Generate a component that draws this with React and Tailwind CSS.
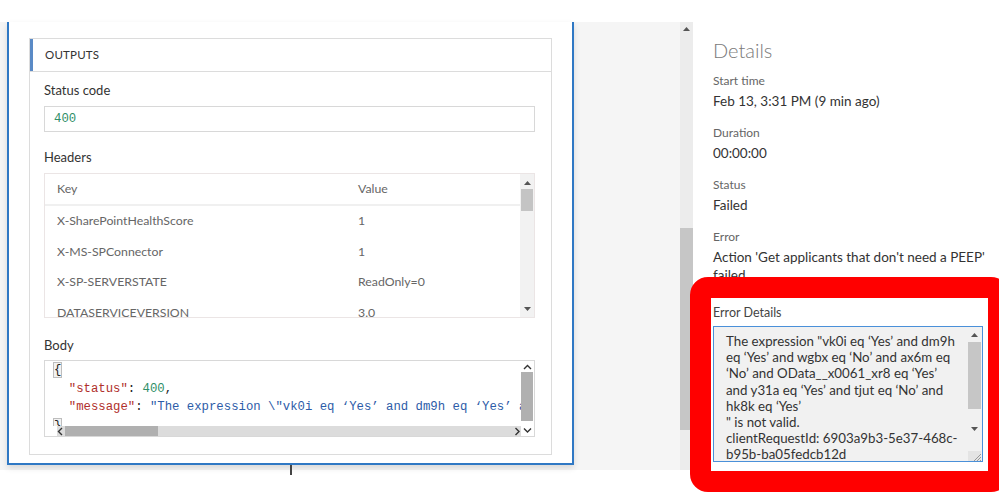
import React from "react";

const ui = "font-['Segoe_UI',Lato,'Noto_Sans',sans-serif]";
const mono = "font-['Consolas','Liberation_Mono',monospace]";

const headers = [
  ["X-SharePointHealthScore", "1"],
  ["X-MS-SPConnector", "1"],
  ["X-SP-SERVERSTATE", "ReadOnly=0"],
  ["DATASERVICEVERSION", "3.0"],
];

const details = [
  ["Start time", ["Feb 13, 3:31 PM (9 min ago)"]],
  ["Duration", ["00:00:00"]],
  ["Status", ["Failed"]],
  ["Error", ["Action 'Get applicants that don't need a PEEP'", "failed"]],
];

const errorLines = [
  "The expression \"vk0i eq \u2018Yes\u2019 and dm9h",
  "eq \u2018Yes\u2019 and wgbx eq \u2018No\u2019 and ax6m eq",
  "\u2018No\u2019 and OData__x0061_xr8 eq \u2018Yes\u2019",
  "and y31a eq \u2018Yes\u2019 and tjut eq \u2018No\u2019 and",
  "hk8k eq \u2018Yes\u2019",
  "\" is not valid.",
  "clientRequestId: 6903a9b3-5e37-468c-",
  "b95b-ba05fedcb12d",
];

const Tri = ({ down, className }) => (
  <svg width="7" height="4" viewBox="0 0 7 4" className={className}>
    <path d={down ? "M0 0h7L3.5 4z" : "M3.5 0L7 4H0z"} fill="#555" />
  </svg>
);

const Chev = ({ dir }) => {
  const d = {
    up: "M1 5l3.5-3.5L8 5",
    down: "M1 1.5L4.5 5 8 1.5",
    left: "M5 1L1.5 4.5 5 8",
    right: "M1.5 1L5 4.5 1.5 8",
  }[dir];
  const vert = dir === "up" || dir === "down";
  return (
    <svg width={vert ? 9 : 7} height={vert ? 7 : 9} viewBox={vert ? "0 0 9 7" : "0 0 7 9"}>
      <path d={d} fill="none" stroke="#333" strokeWidth="1.4" />
    </svg>
  );
};

const OutputsCard = () => (
  <div className="flex flex-col items-center">
    <div className="w-[567px] h-[443px] bg-white border-x-2 border-b-2 border-[#2f78c4] shadow-[0_3px_6px_rgba(0,0,0,0.12)] px-[20px] pt-[16px]">
      <div className="border border-[#dcdcdc] h-[417px]">
        <div className="flex items-center h-[33px] border-b border-[#dcdcdc]">
          <div className="w-[3px] h-full bg-[#5a8ac6]" />
          <div className="pl-[12px] text-[11.5px] text-[#333] tracking-[0.2px]">OUTPUTS</div>
        </div>
        <div className="pl-[14px] pr-[16px] pt-[10px]">
          <div className="text-[13px] leading-[16px] text-[#333]">Status code</div>
          <div className={`${mono} mt-[8px] h-[26px] border border-[#d8d8d8] pl-[9px] flex items-center text-[12.3px] text-[#2f8f68]`}>
            400
          </div>

          <div className="mt-[17px] text-[13px] leading-[16px] text-[#333]">Headers</div>
          <div className="mt-[8px] h-[145px] border border-[#ebe5e5] flex overflow-hidden">
            <div className="flex-1 overflow-hidden text-[12.3px] text-[#666]">
              <div className="flex items-center h-[32px] border-b-2 border-[#f0f0f0]">
                <div className="w-[313px] pl-[12px]">Key</div>
                <div>Value</div>
              </div>
              {headers.map(([k, v]) => (
                <div key={k} className="flex items-center h-[30.5px]">
                  <div className="w-[313px] pl-[12px]">{k}</div>
                  <div>{v}</div>
                </div>
              ))}
            </div>
            <div className="w-[14px] bg-[#f2f2f2] flex flex-col items-center">
              <Tri className="mt-[7px]" />
              <div className="mt-[4px] w-[12px] h-[22px] bg-[#c4c4c4]" />
              <div className="flex-1" />
              <Tri down className="mb-[6px]" />
            </div>
          </div>

          <div className="mt-[19px] text-[13px] leading-[16px] text-[#333]">Body</div>
          <div className="mt-[7px] h-[77px] border border-[#d8d8d8] flex">
            <div className="flex-1 flex flex-col overflow-hidden">
              <div className={`${mono} flex-1 overflow-hidden pl-[9px] text-[12.3px] leading-[18.5px] whitespace-pre text-[#222]`}>
                <div><span className="outline outline-1 outline-[#bdbdbd] bg-[#f2f2f2]">{"{"}</span></div>
                <div>
                  {"  "}<span className="text-[#b0302b]">"status"</span>: <span className="text-[#2f8f68]">400</span>,
                </div>
                <div>
                  {"  "}<span className="text-[#b0302b]">"message"</span>: <span className="text-[#2d5ca8]">"The expression \"vk0i eq ‘Yes’ and dm9h eq ‘Yes’ and wgbx eq ‘No’</span>
                </div>
                <div><span className="outline outline-1 outline-[#bdbdbd] bg-[#f2f2f2]">{"}"}</span></div>
              </div>
              <div className="h-[10px] flex items-center bg-[#dcdcdc] ml-[12px]">
                <Chev dir="left" />
                <div className="ml-[1px] w-[93px] h-full bg-[#b0b0b0]" />
                <div className="flex-1" />
                <Chev dir="right" />
              </div>
            </div>
            <div className="w-[12px] mr-[1px] flex flex-col items-center bg-white">
              <div className="mt-[3px]"><Chev dir="up" /></div>
              <div className="mt-[1px] w-[12px] h-[49px] bg-[#b0b0b0]" />
              <div className="flex-1" />
              <div className="mb-[2px]"><Chev dir="down" /></div>
            </div>
          </div>
        </div>
      </div>
    </div>
    <div className="w-[2px] h-[10px] bg-[#444]" />
  </div>
);

const DetailsPane = () => (
  <div className={`${ui} relative flex-1 min-w-0 bg-white pl-[20px] pr-[16px] pt-[15px]`}>
    <div className="text-[20px] leading-[26px] text-[#7a7a7a] font-light">Details</div>
    <div className="mt-[10px]">
      {details.map(([label, lines], i) => (
        <div key={label} className={i ? "mt-[15px]" : ""}>
          <div className="text-[12px] leading-[16px] text-[#666]">{label}</div>
          <div className="mt-[3px] text-[13.5px] leading-[18px] text-[#333]">
            {lines.map((l) => (
              <div key={l} className="whitespace-nowrap">{l}</div>
            ))}
          </div>
        </div>
      ))}
    </div>
    <div className="mt-[21px] text-[12.5px] leading-[16px] text-[#444]">Error Details</div>
    <div className="mt-[5px] h-[136px] border border-[#4a90d9] bg-[#f1f1f1] flex">
      <div className="flex-1 pl-[12px] pt-[6px] text-[13.3px] leading-[16.2px] text-[#333] overflow-hidden">
        {errorLines.map((l, i) => (
          <div key={i} className="whitespace-nowrap">{l}</div>
        ))}
      </div>
      <div className="w-[13px] mr-[1px] flex flex-col items-center">
        <Tri className="mt-[6px]" />
        <div className="mt-[5px] w-[13px] h-[67px] bg-[#c6c6c6]" />
        <div className="flex-1" />
        <Tri down className="mb-[20px]" />
        <div className="w-[13px] h-[10px] bg-[#e4e4e4] flex justify-end items-end">
          <svg width="8" height="8" viewBox="0 0 8 8">
            <path d="M8 1L1 8M8 4L4 8M8 7L7 8" stroke="#999" strokeWidth="1" />
          </svg>
        </div>
      </div>
    </div>
    <div className="absolute left-[-3px] top-[255px] w-[319px] h-[215px] border-[21px] border-[#ff0000] rounded-[18px]" />
  </div>
);

export default function App() {
  return (
    <div className={`${ui} w-[999px] h-[499px] overflow-hidden bg-white`}>
      <div className="h-[22px]" />
      <div className="flex h-[477px]">
        <div className="w-[680px] shrink-0 h-[448px] bg-[#f5f5f5] pl-[7px]">
          <div className="w-[567px]">
            <OutputsCard />
          </div>
        </div>
        <div className="w-[13px] shrink-0 h-[448px] bg-[#ececec] flex flex-col items-center">
          <Tri className="mt-[5px]" />
          <div className="mt-[197px] w-[13px] h-[202px] bg-[#c6c6c6]" />
        </div>
        <DetailsPane />
      </div>
    </div>
  );
}
